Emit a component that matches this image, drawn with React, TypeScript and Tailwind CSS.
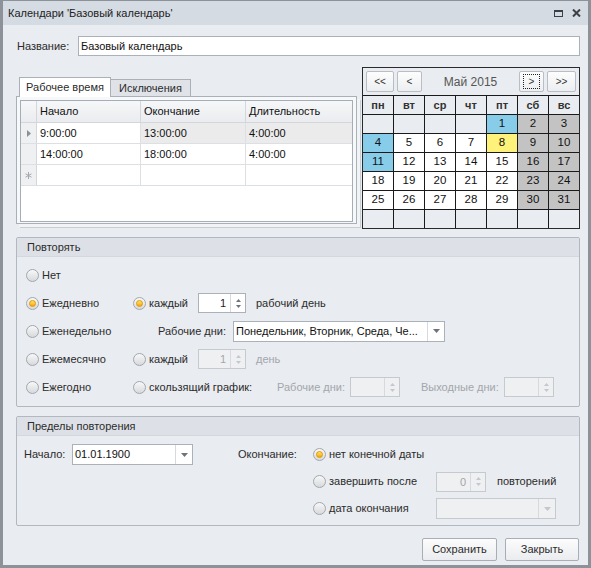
import React from 'react';

type DayKind = 'empty' | 'work' | 'off' | 'blue' | 'today';

// Май 2015, первая неделя начинается с пятницы
const DAYS: { n?: number; k: DayKind }[] = [
  { k: 'empty' }, { k: 'empty' }, { k: 'empty' }, { k: 'empty' }, { n: 1, k: 'blue' }, { n: 2, k: 'off' }, { n: 3, k: 'off' },
  { n: 4, k: 'blue' }, { n: 5, k: 'work' }, { n: 6, k: 'work' }, { n: 7, k: 'work' }, { n: 8, k: 'today' }, { n: 9, k: 'off' }, { n: 10, k: 'off' },
  { n: 11, k: 'blue' }, { n: 12, k: 'work' }, { n: 13, k: 'work' }, { n: 14, k: 'work' }, { n: 15, k: 'work' }, { n: 16, k: 'off' }, { n: 17, k: 'off' },
  { n: 18, k: 'work' }, { n: 19, k: 'work' }, { n: 20, k: 'work' }, { n: 21, k: 'work' }, { n: 22, k: 'work' }, { n: 23, k: 'off' }, { n: 24, k: 'off' },
  { n: 25, k: 'work' }, { n: 26, k: 'work' }, { n: 27, k: 'work' }, { n: 28, k: 'work' }, { n: 29, k: 'work' }, { n: 30, k: 'off' }, { n: 31, k: 'off' },
  { k: 'empty' }, { k: 'empty' }, { k: 'empty' }, { k: 'empty' }, { k: 'empty' }, { k: 'empty' }, { k: 'empty' },
];

const DAY_BG: Record<DayKind, string> = {
  empty: 'bg-[#e9ecf0]',
  work: 'bg-white',
  off: 'bg-[#c3c3c3]',
  blue: 'bg-[#87cdea]',
  today: 'bg-[#fff27a]',
};

const WEEK = ['пн', 'вт', 'ср', 'чт', 'пт', 'сб', 'вс'];

const ROWS = [
  { start: '9:00:00', end: '13:00:00', dur: '4:00:00', current: true },
  { start: '14:00:00', end: '18:00:00', dur: '4:00:00', current: false },
];

function Arrow({ up, disabled }: { up?: boolean; disabled?: boolean }) {
  return (
    <svg width="5" height="3" viewBox="0 0 5 3" className={disabled ? 'fill-[#c4c7cc]' : 'fill-[#6d737b]'}>
      {up ? <path d="M2.5 0 L5 3 L0 3 Z" /> : <path d="M0 0 L5 0 L2.5 3 Z" />}
    </svg>
  );
}

function Radio({ label, checked, className = '' }: { label: string; checked?: boolean; className?: string }) {
  return (
    <span className={`flex items-center gap-[3px] ${className}`}>
      <span className="flex h-[13px] w-[13px] shrink-0 items-center justify-center rounded-full border border-[#a2a7ae] bg-gradient-to-b from-[#f8f8f8] to-[#d7d9dc]">
        {checked && (
          <span className="h-[7px] w-[7px] rounded-full border border-[#e29700] bg-gradient-to-b from-[#ffe65e] to-[#f6a500]" />
        )}
      </span>
      <span className="whitespace-nowrap">{label}</span>
    </span>
  );
}

function Spin({ value, disabled, className = '' }: { value?: string; disabled?: boolean; className?: string }) {
  return (
    <div
      className={`flex h-[20px] border ${
        disabled ? 'border-[#c6cacf] bg-[#eef0f2] text-[#a3a6ab]' : 'border-[#abb1b9] bg-white text-[#1c1c1c]'
      } ${className}`}
    >
      <div className="flex-1 pr-[4px] text-right leading-[18px]">{value}</div>
      <div className="flex w-[15px] flex-col items-center justify-center gap-[3px] border-l border-[#d6d9dd]">
        <Arrow up disabled={disabled} />
        <Arrow disabled={disabled} />
      </div>
    </div>
  );
}

function Combo({ value, disabled, className = '' }: { value?: string; disabled?: boolean; className?: string }) {
  return (
    <div
      className={`flex h-[21px] border ${
        disabled ? 'border-[#c6cacf] bg-[#eef0f2]' : 'border-[#abb1b9] bg-white'
      } ${className}`}
    >
      <div className="flex-1 truncate pl-[2px] leading-[19px] text-[#111]">{value}</div>
      <div className="flex w-[17px] items-center justify-center border-l border-[#d6d9dd]">
        <svg width="7" height="4" viewBox="0 0 7 4" className={disabled ? 'fill-[#c4c7cc]' : 'fill-[#6d737b]'}>
          <path d="M0 0 L7 0 L3.5 4 Z" />
        </svg>
      </div>
    </div>
  );
}

function Section({ title, children }: { title: string; children: React.ReactNode }) {
  return (
    <div className="rounded-[2px] border border-[#b2b8c0]">
      <div className="flex h-[19px] items-center border-b border-[#d3d8de] bg-[#dde1e7] pl-[10px] text-[#2b2b2b]">{title}</div>
      {children}
    </div>
  );
}

function NavBtn({ label, focus, className = '' }: { label: string; focus?: boolean; className?: string }) {
  return (
    <div
      className={`flex h-[21px] items-center justify-center rounded-[2px] border border-[#b9bdc4] bg-gradient-to-b from-[#fdfdfd] to-[#eceef1] text-[10px] text-[#333] ${className}`}
    >
      {focus ? <span className="border border-dotted border-[#222] px-[5px] leading-[13px]">{label}</span> : label}
    </div>
  );
}

export default function App() {
  return (
    <div className="h-[568px] w-[591px] bg-[#8d9299] px-[3px] pb-[3px] pt-[1px] font-['Liberation_Sans',Arial,sans-serif] text-[11px] text-[#2b2b2b]">
      <div className="flex h-full flex-col">
        {/* Title bar */}
        <div className="flex h-[24px] items-center justify-between bg-[#d5dbe2] pl-[5px] pr-[7px] text-[#222]">
          <span>Календари 'Базовый календарь'</span>
          <div className="flex items-center gap-[9px]">
            <svg width="9" height="7" viewBox="0 0 9 7">
              <rect x="0.5" y="0.5" width="8" height="6" fill="none" stroke="#3c3f44" />
              <rect x="0" y="0" width="9" height="2" fill="#3c3f44" />
            </svg>
            <svg width="9" height="8" viewBox="0 0 9 8">
              <path d="M1 0.5 L8 7.5 M8 0.5 L1 7.5" stroke="#3c3f44" strokeWidth="2" />
            </svg>
          </div>
        </div>

        {/* Body */}
        <div className="flex flex-1 flex-col bg-[#e9ecf0] pl-[13px] pr-[8px] pt-[11px]">
          <div className="flex items-center">
            <span className="w-[62px] pl-px">Название:</span>
            <div className="h-[20px] flex-1 border border-[#abb1b9] bg-white pl-[2px] leading-[18px] text-[#111]">Базовый календарь</div>
          </div>

          <div className="mt-[11px] flex justify-between">
            {/* Tabs + grid */}
            <div className="flex w-[342px] flex-col pt-[10px]">
              <div className="flex items-end pl-[3px]">
                <div className="z-10 flex h-[20px] w-[92px] items-center justify-center border border-b-0 border-[#a9b0b8] bg-white">
                  Рабочее время
                </div>
                <div className="flex h-[18px] w-[80px] items-center justify-center border border-l-0 border-[#a9b0b8] bg-[#dfe3e8]">
                  Исключения
                </div>
              </div>
              <div className="-mt-px flex h-[128px] w-[341px] border border-[#a9b0b8] bg-[#f7f8f9] px-[3px] pb-px pt-[3px] shadow-[3px_3px_0_#f2f3f5,4px_4px_0_#c9ced4]">
                <div className="flex flex-1 flex-col border border-[#a6adb6] bg-white text-[#111]">
                  <div className="grid h-[22px] grid-cols-[16px_104px_105px_1fr] border-b border-[#d3d7dc] bg-gradient-to-b from-[#f6f7f8] to-[#eaecef]">
                    <div className="border-r border-[#d3d7dc]" />
                    <div className="flex items-center border-r border-[#d3d7dc] pl-[3px]">Начало</div>
                    <div className="flex items-center border-r border-[#d3d7dc] pl-[3px]">Окончание</div>
                    <div className="flex items-center pl-[3px]">Длительность</div>
                  </div>
                  {ROWS.map((r) => (
                    <div key={r.start} className="grid h-[21px] grid-cols-[16px_104px_105px_1fr] border-b border-[#dcdfe3]">
                      <div className="flex items-center justify-center border-r border-[#d3d7dc] bg-[#eef0f2]">
                        {r.current && (
                          <svg width="4" height="7" viewBox="0 0 4 7" className="fill-[#8a9098]">
                            <path d="M0 0 L4 3.5 L0 7 Z" />
                          </svg>
                        )}
                      </div>
                      <div className="flex items-center border-r border-[#dcdfe3] bg-white pl-[3px]">{r.start}</div>
                      <div className={`flex items-center border-r border-[#dcdfe3] pl-[3px] ${r.current ? 'bg-[#ebebeb]' : 'bg-white'}`}>{r.end}</div>
                      <div className={`flex items-center pl-[3px] ${r.current ? 'bg-[#ebebeb]' : 'bg-white'}`}>{r.dur}</div>
                    </div>
                  ))}
                  <div className="grid h-[21px] grid-cols-[16px_104px_105px_1fr] border-b border-[#dcdfe3]">
                    <div className="flex items-center justify-center border-r border-[#d3d7dc] bg-[#eef0f2]">
                      <svg width="7" height="7" viewBox="0 0 7 7" stroke="#a4a9b0" strokeWidth="1">
                        <path d="M3.5 0 V7 M0.5 1.8 L6.5 5.2 M0.5 5.2 L6.5 1.8" />
                      </svg>
                    </div>
                    <div className="border-r border-[#dcdfe3]" />
                    <div className="border-r border-[#dcdfe3]" />
                    <div />
                  </div>
                </div>
              </div>
            </div>

            {/* Calendar */}
            <div className="flex w-[218px] flex-col border border-[#2a2a2a] bg-[#e9ecf0]">
              <div className="flex h-[27px] items-center gap-[3px] px-[3px]">
                <NavBtn label="<<" className="w-[28px]" />
                <NavBtn label="<" className="w-[25px]" />
                <div className="flex-1 text-center text-[12px] text-[#555]">Май 2015</div>
                <NavBtn label=">" focus className="w-[25px]" />
                <NavBtn label=">>" className="w-[29px]" />
              </div>
              <div className="grid grid-cols-7 gap-px border-t border-[#1a1a1a] bg-[#1a1a1a]">
                {WEEK.map((w) => (
                  <div key={w} className="flex h-[18px] items-center justify-center bg-[#e9ecf0] font-bold text-[#333]">
                    {w}
                  </div>
                ))}
                {DAYS.map((d, i) => (
                  <div key={i} className={`flex h-[18px] items-center justify-center text-[11.5px] text-[#111] ${DAY_BG[d.k]}`}>
                    {d.n}
                  </div>
                ))}
              </div>
            </div>
          </div>

          {/* Повторять */}
          <div className="mt-[8px]">
            <Section title="Повторять">
              <div className="flex flex-col pb-[5px] pl-[9px] pt-[4px]">
                <div className="flex h-[28px] items-center">
                  <Radio label="Нет" />
                </div>
                <div className="flex h-[28px] items-center">
                  <Radio label="Ежедневно" checked className="w-[107px]" />
                  <Radio label="каждый" checked className="w-[65px]" />
                  <Spin value="1" className="w-[48px]" />
                  <span className="ml-[10px]">рабочий день</span>
                </div>
                <div className="flex h-[28px] items-center">
                  <Radio label="Еженедельно" className="w-[132px]" />
                  <span className="w-[75px]">Рабочие дни:</span>
                  <Combo value="Понедельник, Вторник, Среда, Че..." className="w-[212px]" />
                </div>
                <div className="flex h-[28px] items-center">
                  <Radio label="Ежемесячно" className="w-[107px]" />
                  <Radio label="каждый" className="w-[65px]" />
                  <Spin value="1" disabled className="w-[48px]" />
                  <span className="ml-[10px] text-[#a3a6ab]">день</span>
                </div>
                <div className="flex h-[28px] items-center">
                  <Radio label="Ежегодно" className="w-[107px]" />
                  <Radio label="скользящий график:" className="w-[144px]" />
                  <span className="w-[73px] text-[#a3a6ab]">Рабочие дни:</span>
                  <Spin disabled className="w-[50px]" />
                  <span className="ml-[21px] w-[83px] text-[#a3a6ab]">Выходные дни:</span>
                  <Spin disabled className="w-[50px]" />
                </div>
              </div>
            </Section>
          </div>

          {/* Пределы повторения */}
          <div className="mt-[9px]">
            <Section title="Пределы повторения">
              <div className="flex pb-[3px] pl-[7px] pt-[5px]">
                <div className="flex h-[27px] w-[214px] items-center">
                  <span className="w-[48px]">Начало:</span>
                  <Combo value="01.01.1900" className="w-[121px]" />
                </div>
                <div className="flex h-[27px] w-[75px] items-center">Окончание:</div>
                <div className="flex flex-col">
                  <div className="flex h-[27px] items-center">
                    <Radio label="нет конечной даты" checked />
                  </div>
                  <div className="flex h-[27px] items-center">
                    <Radio label="завершить после" className="w-[123px]" />
                    <Spin value="0" disabled className="w-[50px]" />
                    <span className="ml-[11px]">повторений</span>
                  </div>
                  <div className="flex h-[27px] items-center">
                    <Radio label="дата окончания" className="w-[123px]" />
                    <Combo disabled className="w-[120px]" />
                  </div>
                </div>
              </div>
            </Section>
          </div>

          <div className="mt-[12px] flex justify-end gap-[8px] pr-px">
            <div className="flex h-[23px] w-[75px] items-center justify-center rounded-[2px] border border-[#a9aeb5] bg-gradient-to-b from-[#fcfcfc] to-[#eaecef]">
              Сохранить
            </div>
            <div className="flex h-[23px] w-[74px] items-center justify-center rounded-[2px] border border-[#a9aeb5] bg-gradient-to-b from-[#fcfcfc] to-[#eaecef]">
              Закрыть
            </div>
          </div>
        </div>
      </div>
    </div>
  );
}
